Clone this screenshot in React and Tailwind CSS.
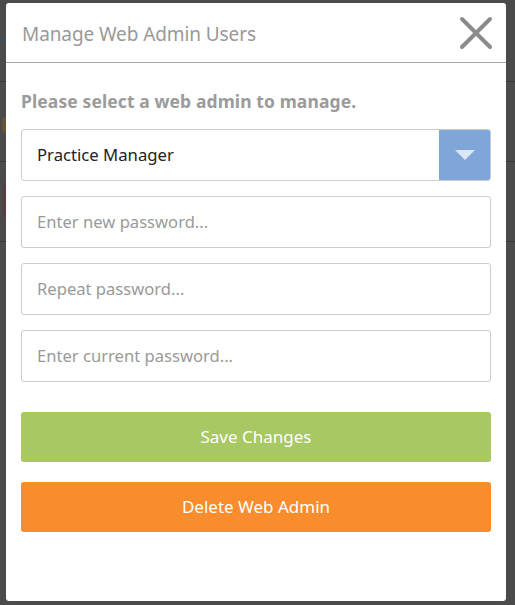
export default function App() {
  const font = { fontFamily: '"Noto Sans", "Open Sans", sans-serif' };
  return (
    <div className="relative w-[515px] h-[605px] bg-[#4b4b4b] overflow-hidden" style={font}>
      {/* background page rows under overlay */}
      <div className="flex flex-col">
        <div className="h-[82px] border-b border-[#3a3a3a] flex items-center pl-[3px]">
          <div className="w-[14px] h-[14px] rounded-full bg-[#3f4a52] mt-[-2px]" />
        </div>
        <div className="h-[80px] border-b border-[#3a3a3a] flex items-center">
          <div className="w-[8px] h-[16px] rounded-full bg-[#6a5236] ml-[2px] mt-[6px]" />
        </div>
        <div className="h-[80px] border-b border-[#3a3a3a] flex items-start pt-[21px]">
          <div className="w-[8px] h-[34px] bg-[#5a3c3c] ml-[3px]" />
        </div>
      </div>

      <div className="absolute left-[6px] top-[3px] w-[500px] h-[598px] bg-white rounded-[3px] flex flex-col">
        <div className="h-[60px] border-b border-[#a8a8a8] flex items-center justify-between pl-[16px] pr-[13px]">
          <span className="text-[19px] text-[#999999] tracking-[-0.1px] mt-[3px]">Manage Web Admin Users</span>
          <svg width="34" height="34" viewBox="0 0 34 34">
            <path d="M3 3 L31 31 M31 3 L3 31" stroke="#8c8c8c" strokeWidth="4" strokeLinecap="round" />
          </svg>
        </div>
        <div className="px-[15px] flex flex-col">
          <div className="mt-[27px] text-[17.5px] font-bold text-[#9b9b9b] tracking-[0.1px] leading-[23px]">
            Please select a web admin to manage.
          </div>
          <div className="mt-[16px] h-[52px] border border-[#cccccc] rounded-[3px] flex overflow-hidden">
            <div className="flex-1 flex items-center pl-[15px] text-[16.7px] text-[#222222]">Practice Manager</div>
            <div className="w-[51px] bg-[#7ea6d8] flex items-center justify-center">
              <svg width="20" height="11" viewBox="0 0 20 11">
                <path d="M0 0 L20 0 L10 10 Z" fill="#dde7f3" />
              </svg>
            </div>
          </div>
          <div className="mt-[15px] flex flex-col gap-[15px]">
            {["Enter new password...", "Repeat password...", "Enter current password..."].map((p) => (
              <div key={p} className="h-[52px] border border-[#cccccc] rounded-[3px] flex items-center pl-[15px] text-[16.6px] text-[#9a9a9a]">
                {p}
              </div>
            ))}
          </div>
          <div className="mt-[30px] h-[50px] rounded-[3px] bg-[#a8c864] flex items-center justify-center text-[17px] text-white">
            Save Changes
          </div>
          <div className="mt-[20px] h-[50px] rounded-[3px] bg-[#f98c2c] flex items-center justify-center text-[17px] text-white">
            Delete Web Admin
          </div>
        </div>
      </div>
    </div>
  );
}
